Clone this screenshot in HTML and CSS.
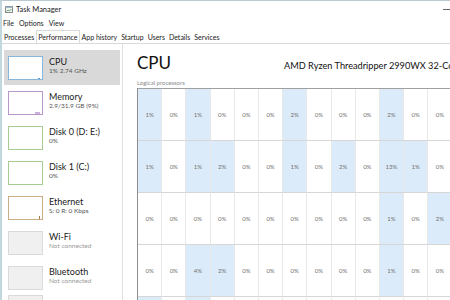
FILE: index.html
```html
<!DOCTYPE html>
<html>
<head>
<meta charset="utf-8">
<title>Task Manager</title>
<link rel="stylesheet" href="styles.css">
</head>
<body>
<div class="window">
  <div class="titlebar">
    <svg class="app-icon" viewBox="0 0 8 7" width="8" height="7"><rect x="0.5" y="0.5" width="7" height="6" fill="#f4f4f4" stroke="#8a8a8a"/><rect x="0.5" y="0.5" width="7" height="1.5" fill="#9bb6c9"/><polyline points="1.5,5.5 3,4 4.5,5 6.5,3" fill="none" stroke="#3a9a3a" stroke-width="0.8"/></svg>
    <span class="title">Task Manager</span>
    <span class="minimize"></span>
  </div>
  <div class="menubar"><span>File</span><span>Options</span><span>View</span></div>
  <div class="tabs">
    <span class="tab">Processes</span>
    <span class="tab active">Performance</span>
    <span class="tab">App history</span>
    <span class="tab">Startup</span>
    <span class="tab">Users</span>
    <span class="tab">Details</span>
    <span class="tab">Services</span>
  </div>
  <div class="content">
    <aside class="sidebar">
      <div class="item selected"><div class="thumb cpu"></div><div class="info"><div class="name">CPU</div><div class="sub">1% 2.74 GHz</div></div></div>
      <div class="item"><div class="thumb mem"></div><div class="info"><div class="name">Memory</div><div class="sub">2.9/31.9 GB (9%)</div></div></div>
      <div class="item"><div class="thumb disk"></div><div class="info"><div class="name">Disk 0 (D: E:)</div><div class="sub">0%</div></div></div>
      <div class="item"><div class="thumb disk"></div><div class="info"><div class="name">Disk 1 (C:)</div><div class="sub">0%</div></div></div>
      <div class="item"><div class="thumb eth"></div><div class="info"><div class="name">Ethernet</div><div class="sub">S: 0 R: 0 Kbps</div></div></div>
      <div class="item"><div class="thumb off"></div><div class="info"><div class="name">Wi-Fi</div><div class="sub muted">Not connected</div></div></div>
      <div class="item"><div class="thumb off"></div><div class="info"><div class="name">Bluetooth</div><div class="sub muted">Not connected</div></div></div>
      <div class="item last"><div class="thumb off"></div></div>
    </aside>
    <main class="main">
      <div class="header"><h1>CPU</h1><div class="model">AMD Ryzen Threadripper 2990WX 32-Co</div></div>
      <div class="caption">Logical processors</div>
      <div class="grid">
        <div class="cell hl">1%</div><div class="cell">0%</div><div class="cell hl">1%</div><div class="cell">0%</div><div class="cell">0%</div><div class="cell">0%</div><div class="cell hl">2%</div><div class="cell">0%</div><div class="cell">0%</div><div class="cell">0%</div><div class="cell hl">2%</div><div class="cell">0%</div><div class="cell">0%</div>
        <div class="cell hl">1%</div><div class="cell">0%</div><div class="cell hl">1%</div><div class="cell hl">2%</div><div class="cell">0%</div><div class="cell">0%</div><div class="cell hl">1%</div><div class="cell">0%</div><div class="cell hl">2%</div><div class="cell">0%</div><div class="cell hl">13%</div><div class="cell hl">1%</div><div class="cell">0%</div>
        <div class="cell">0%</div><div class="cell">0%</div><div class="cell">0%</div><div class="cell">0%</div><div class="cell">0%</div><div class="cell">0%</div><div class="cell">0%</div><div class="cell">0%</div><div class="cell">0%</div><div class="cell">0%</div><div class="cell hl">1%</div><div class="cell">0%</div><div class="cell hl">2%</div>
        <div class="cell">0%</div><div class="cell">0%</div><div class="cell hl">4%</div><div class="cell hl">2%</div><div class="cell">0%</div><div class="cell">0%</div><div class="cell">0%</div><div class="cell">0%</div><div class="cell">0%</div><div class="cell">0%</div><div class="cell hl">1%</div><div class="cell">0%</div><div class="cell">0%</div>
        <div class="cell hl"></div><div class="cell"></div><div class="cell hl"></div><div class="cell"></div><div class="cell"></div><div class="cell"></div><div class="cell"></div><div class="cell"></div><div class="cell"></div><div class="cell"></div><div class="cell"></div><div class="cell"></div><div class="cell"></div>
      </div>
    </main>
  </div>
</div>
</body>
</html>
```

FILE: styles.css
```css
html, body {
  margin: 0;
  padding: 0;
}
body {
  width: 450px;
  height: 300px;
  overflow: hidden;
  background: #ffffff;
  font-family: Lato, "Open Sans", sans-serif;
  color: #1a1a1a;
}
.window {
  height: 300px;
  box-sizing: border-box;
  border-left: 2px solid #c3d7df;
  border-top: 1px solid #b8c9d3;
  display: flex;
  flex-direction: column;
}
.titlebar {
  height: 16px;
  flex: none;
  display: flex;
  align-items: center;
  padding-left: 3px;
  font-size: 7.5px;
  color: #222;
}
.app-icon {
  flex: none;
  margin-right: 3px;
}
.minimize {
  margin-left: auto;
  width: 7px;
  height: 1px;
  background: #666;
}
.menubar {
  height: 12px;
  flex: none;
  display: flex;
  align-items: center;
  gap: 5px;
  padding-left: 1px;
  font-size: 7px;
  color: #222;
}
.tabs {
  height: 14px;
  flex: none;
  display: flex;
  align-items: flex-end;
  border-bottom: 1px solid #d9d9d9;
  padding-left: 0;
}
.tab {
  height: 12px;
  line-height: 12px;
  padding: 0 1px;
  font-size: 7px;
  color: #222;
  border: 1px solid transparent;
  border-bottom: none;
}
.tab.active {
  background: #ffffff;
  border-color: #d9d9d9;
}
.content {
  flex: 1;
  display: flex;
  min-height: 0;
}
.sidebar {
  flex: none;
  width: 121px;
  box-sizing: border-box;
  padding: 6px 2px 0;
  border-right: 1px solid #e0e0e0;
  overflow: hidden;
}
.item {
  display: flex;
  height: 35px;
  box-sizing: border-box;
  padding: 6px 0 0 4px;
}
.item.selected {
  background: #d9d9d9;
}
.item.last {
  padding-top: 0;
}
.thumb {
  flex: none;
  position: relative;
  width: 35px;
  height: 24px;
  box-sizing: border-box;
  border: 1px solid #cccccc;
  background: #ffffff;
}
.thumb.cpu { border-color: #86b6dc; }
.thumb.mem { border-color: #b898cc; }
.thumb.disk { border-color: #a9cc92; }
.thumb.eth { border-color: #c9ab84; }
.thumb.off { border-color: #dadada; background: #f0f0f0; }
.thumb.cpu::after,
.thumb.mem::after,
.thumb.eth::after {
  content: "";
  position: absolute;
  right: 2px;
  bottom: 0;
  width: 2px;
  height: 2px;
}
.thumb.cpu::after { background: #5a9bd0; height: 1px; }
.thumb.mem::after { background: #c9b3d8; width: 5px; }
.thumb.eth::after { background: #a87b4a; width: 1px; height: 3px; }
.info {
  margin-left: 6px;
  min-width: 0;
  white-space: nowrap;
}
.name {
  font-size: 9px;
  line-height: 11px;
  color: #1a1a1a;
}
.sub {
  font-size: 6.5px;
  line-height: 8px;
  color: #555;
}
.muted {
  color: #9a9a9a;
}
.main {
  flex: 1;
  min-width: 0;
  padding: 9px 0 0 14px;
  overflow: hidden;
}
.header {
  display: flex;
  align-items: baseline;
  white-space: nowrap;
}
.header h1 {
  flex: none;
  width: 147px;
  margin: 0;
  font-size: 17px;
  font-weight: 400;
  line-height: 20px;
  color: #111;
}
.model {
  font-size: 9.2px;
  color: #111;
}
.caption {
  margin-top: 6px;
  font-size: 6px;
  line-height: 8px;
  color: #8a8a8a;
}
.grid {
  margin-top: 1px;
  display: grid;
  grid-template-columns: repeat(13, 24.2px);
  grid-auto-rows: 52px;
  border-left: 1px solid #8d8d8d;
  border-top: 1px solid #a0a0a0;
}
.cell {
  box-sizing: border-box;
  border-right: 1px solid #e8e8e8;
  border-bottom: 1px solid #d6d6d6;
  display: flex;
  align-items: center;
  justify-content: center;
  font-size: 6px;
  color: #707070;
}
.cell.hl {
  background: #dcebf9;
}
```
